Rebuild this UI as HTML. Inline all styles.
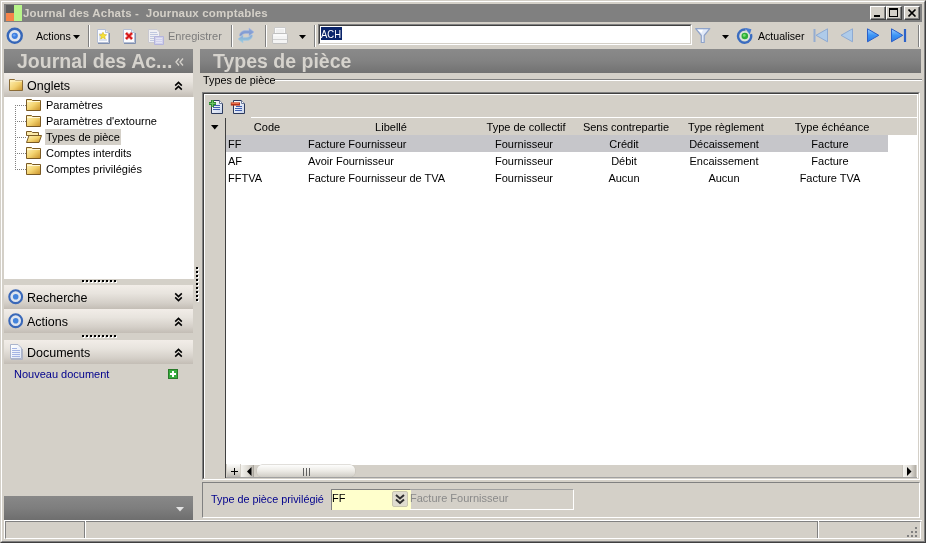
<!DOCTYPE html>
<html><head><meta charset="utf-8">
<style>
*{margin:0;padding:0;box-sizing:border-box}
html,body{width:926px;height:543px;overflow:hidden;background:#d4d0c8}
body{position:relative;will-change:transform;font-family:"Liberation Sans",sans-serif;font-size:11px;color:#000}
.a{position:absolute}
.t{position:absolute;white-space:nowrap;line-height:1}
.tc{position:absolute;white-space:nowrap;line-height:1;text-align:center}
.sepv{position:absolute;top:25px;width:2px;height:22px;border-left:1px solid #808080;border-right:1px solid #fff}
.secth{position:absolute;left:4px;width:189px;height:24px;background:linear-gradient(#f2ede8,#e8e4de 35%,#d4cfc8 75%,#c3bdb5)}
.hdr{position:absolute;top:49px;height:24px;background:linear-gradient(#8a8a8a,#828282 50%,#727272)}
.hdrt{position:absolute;white-space:nowrap;line-height:1;font-weight:bold;font-size:19.5px;color:#d6d3cd}
.sunk{position:absolute;border-top:1px solid #808080;border-left:1px solid #808080;border-bottom:1px solid #fff;border-right:1px solid #fff}
.tb{position:absolute;top:6px;width:16px;height:14px;background:#d4d0c8;border-top:1px solid #fff;border-left:1px solid #fff;border-right:1px solid #404040;border-bottom:1px solid #404040;box-shadow:inset -1px -1px 0 #808080}
.dotv{position:absolute;width:2px;background:repeating-linear-gradient(#000 0 1px,#000 1px 2px,transparent 2px 4px)}
.doth{position:absolute;height:2px;background:repeating-linear-gradient(90deg,#000 0 2px,transparent 2px 4px)}
.lt{font-size:11px}
</style></head><body>
<!-- window frame -->
<div class="a" style="left:0;top:0;width:926px;height:543px;border-top:1px solid #d4d0c8;border-left:1px solid #d4d0c8;border-right:1px solid #404040;border-bottom:1px solid #404040"></div>
<div class="a" style="left:1px;top:1px;width:924px;height:541px;border-top:1px solid #fff;border-left:1px solid #fff;border-right:1px solid #808080;border-bottom:1px solid #808080"></div>

<!-- title bar -->
<div class="a" style="left:4px;top:4px;width:918px;height:18px;background:#808080"></div>
<div class="a" style="left:6px;top:5px;width:8px;height:8px;background:#5c5c5c"></div>
<div class="a" style="left:6px;top:13px;width:8px;height:8px;background:#f5844a"></div>
<div class="a" style="left:14px;top:5px;width:8px;height:16px;background:#b8f58a"></div>
<div class="t" style="left:23px;top:8px;font-weight:bold;font-size:11.5px;letter-spacing:0.17px;color:#d4d0c8">Journal des Achats -&nbsp; Journaux comptables</div>
<div class="tb" style="left:870px"><div class="a" style="left:3px;top:8px;width:6px;height:2px;background:#000"></div></div>
<div class="tb" style="left:886px"><div class="a" style="left:2px;top:1px;width:9px;height:9px;border:1px solid #000;border-top-width:2px"></div></div>
<div class="tb" style="left:904px"><svg class="a" style="left:3px;top:2px" width="9" height="8" viewBox="0 0 9 8"><path d="M0.5 0.5L7.5 7.5M7.5 0.5L0.5 7.5" stroke="#000" stroke-width="1.6" fill="none"/></svg></div>
<!-- toolbar -->
<svg class="a" style="left:5px;top:27px" width="19" height="19" viewBox="0 0 19 19">
<circle cx="9.75" cy="8.8" r="7" fill="#dfe5ee" stroke="#3566b8" stroke-width="2.4"/>
<circle cx="9.75" cy="8.8" r="3.1" fill="#3d7ee0"/>
<circle cx="9.2" cy="8.2" r="1.3" fill="#6ea6f2"/>
</svg>
<div class="t" style="left:36px;top:31px;font-size:10.6px">Actions</div>
<svg class="a" style="left:73px;top:35px" width="7" height="4" viewBox="0 0 7 4"><path d="M0 0H7L3.5 4Z" fill="#000"/></svg>
<div class="sepv" style="left:88px"></div>
<!-- new doc -->
<svg class="a" style="left:96px;top:29px" width="14" height="15" viewBox="0 0 14 15">
<path d="M1.5 0.5H9.5L12.5 3.5V13.5H1.5Z" fill="#fbfcff" stroke="#b4bed4"/>
<path d="M9.5 0.5V3.5H12.5" fill="#e8ecf4" stroke="#b4bed4"/>
<path d="M2 14.5H13.5V4" fill="none" stroke="#8090b0" stroke-width="1"/>
<path d="M3 5H6M3 7H5M3 9H5M3 11H11" stroke="#b8c6e0"/>
<path d="M7 3.2L8.1 5.6L10.6 5.8L8.7 7.5L9.3 10L7 8.7L4.7 10L5.3 7.5L3.4 5.8L5.9 5.6Z" fill="#f4e23a" stroke="#d8b818" stroke-width="0.6"/>
</svg>
<!-- delete doc -->
<svg class="a" style="left:122px;top:29px" width="14" height="15" viewBox="0 0 14 15">
<path d="M1.5 0.5H9.5L12.5 3.5V13.5H1.5Z" fill="#fbfcff" stroke="#b4bed4"/>
<path d="M9.5 0.5V3.5H12.5" fill="#e8ecf4" stroke="#b4bed4"/>
<path d="M2 14.5H13.5V4" fill="none" stroke="#8090b0" stroke-width="1"/>
<path d="M4 4L10 10M10 4L4 10" stroke="#f06060" stroke-width="3"/>
<path d="M4 4L10 10M10 4L4 10" stroke="#d01010" stroke-width="1.4"/>
</svg>
<!-- save disabled -->
<svg class="a" style="left:148px;top:29px" width="17" height="16" viewBox="0 0 17 16">
<path d="M0.5 0.5H9L11.5 3V13.5H0.5Z" fill="#f0f0f4" stroke="#c8c8d0"/>
<path d="M2 3.5H9M2 5.5H10M2 7.5H10M2 9.5H10M2 11.5H10" stroke="#c0c8e0"/>
<path d="M6.5 7.5H15.5V15.5H6.5Z" fill="#d0d0ec" stroke="#b4b4dc"/>
<path d="M8 9.5H14M8 11.5H14M8 13.5H14" stroke="#e4e4f4"/>
</svg>
<div class="t" style="left:168px;top:31px;font-size:11px;color:#7c7c7c">Enregistrer</div>
<div class="sepv" style="left:231px"></div>
<!-- refresh faded -->
<svg class="a" style="left:237px;top:27px" width="18" height="17" viewBox="0 0 18 17">
<defs><linearGradient id="rf1" x1="0" y1="0" x2="0" y2="1"><stop offset="0" stop-color="#8aa8dc"/><stop offset="1" stop-color="#7f96cc"/></linearGradient>
<linearGradient id="rf2" x1="0" y1="0" x2="0" y2="1"><stop offset="0" stop-color="#86a6d8"/><stop offset="1" stop-color="#98d0dc"/></linearGradient></defs>
<path d="M2.5 9C2.5 5.5 5 3.5 9 3.5H12V1L17 5L12 9V6.5H9C6.5 6.5 5 7.5 4.5 9Z" fill="url(#rf1)" stroke="#a8b8e0" stroke-width="0.6"/>
<path d="M15.5 8C15.5 11.5 13 13.5 9 13.5H6V16L1 12L6 8V10.5H9C11.5 10.5 13 9.5 13.5 8Z" fill="url(#rf2)" stroke="#a8c8e0" stroke-width="0.6"/>
</svg>
<div class="sepv" style="left:265px"></div>
<!-- printer -->
<svg class="a" style="left:271px;top:27px" width="18" height="18" viewBox="0 0 18 18">
<path d="M3.5 0.5H14.5V8H3.5Z" fill="#fafafa" stroke="#cacaca"/>
<path d="M5 3H13M5 5H13" stroke="#e4e4e4"/>
<path d="M1.5 7.5Q1.5 6.5 3 6.5H15Q16.5 6.5 16.5 7.5V15.5Q16.5 16.5 15 16.5H3Q1.5 16.5 1.5 15.5Z" fill="#f4f4f4" stroke="#c0c0c0"/>
<path d="M2 12.5H16" stroke="#d0d0d0"/>
<path d="M2.5 8H15.5" stroke="#fff"/>
</svg>
<svg class="a" style="left:299px;top:35px" width="7" height="4" viewBox="0 0 7 4"><path d="M0 0H7L3.5 4Z" fill="#000"/></svg>
<div class="sepv" style="left:314px"></div>
<!-- input -->
<div class="a" style="left:318px;top:24px;width:374px;height:21px;background:#fff;border-top:1px solid #808080;border-left:1px solid #808080;border-right:1px solid #fff;border-bottom:1px solid #fff"></div>
<div class="a" style="left:319px;top:25px;width:372px;height:19px;border-top:1px solid #404040;border-left:1px solid #404040;border-right:1px solid #d4d0c8;border-bottom:1px solid #d4d0c8"></div>
<div class="a" style="left:321px;top:27px;width:21px;height:13px;background:#0a246a"></div>
<div class="t" style="left:321px;top:29px;font-size:11px;color:#fff;transform:scaleX(0.86);transform-origin:0 0">ACH</div>
<!-- filter -->
<svg class="a" style="left:695px;top:28px" width="16" height="16" viewBox="0 0 16 16">
<path d="M0.7 0.7H14.8L9.2 7.5V14.5H6.3V7.5Z" fill="#e2eaf9" stroke="#8fa3c9" stroke-width="1.2" stroke-linejoin="round"/>
<path d="M2.5 1.8H8L6.5 5Z" fill="#fff"/>
</svg>
<svg class="a" style="left:722px;top:35px" width="7" height="4" viewBox="0 0 7 4"><path d="M0 0H7L3.5 4Z" fill="#000"/></svg>
<!-- refresh circle -->
<svg class="a" style="left:735px;top:28px" width="18" height="17" viewBox="0 0 18 17">
<circle cx="9.8" cy="8.2" r="5" fill="#d8e4dc"/>
<path d="M15.9 6.2A6.6 6.6 0 1 1 10.6 1.6" fill="none" stroke="#3a6cc0" stroke-width="2.4"/>
<path d="M9.6 -0.4L16.4 1.2L14.8 6.6Z" fill="#4a7cd0"/>
<circle cx="9.8" cy="8" r="3.3" fill="#2eae38"/>
<circle cx="9.3" cy="7.4" r="1.4" fill="#78de70"/>
</svg>
<div class="t" style="left:758px;top:31px;font-size:10.6px">Actualiser</div>
<!-- nav -->
<svg class="a" style="left:813px;top:28px" width="16" height="15" viewBox="0 0 16 15">
<path d="M1.5 1V14" stroke="#94acd0" stroke-width="2"/>
<path d="M14.5 0.8V13.8L3 7.3Z" fill="#aecbea" stroke="#8eaad2" stroke-width="1"/>
</svg>
<svg class="a" style="left:840px;top:28px" width="14" height="15" viewBox="0 0 14 15">
<path d="M12.5 0.8V13.8L1 7.3Z" fill="#aecbea" stroke="#8eaad2" stroke-width="1"/>
</svg>
<svg class="a" style="left:866px;top:28px" width="14" height="15" viewBox="0 0 14 15">
<defs><linearGradient id="gb" x1="0" y1="0" x2="0" y2="1"><stop offset="0" stop-color="#9ccdff"/><stop offset="0.5" stop-color="#3d95f5"/><stop offset="1" stop-color="#2a7ae6"/></linearGradient></defs>
<path d="M1.5 0.8V13.8L12.8 7.3Z" fill="url(#gb)" stroke="#2b5fc8" stroke-width="1"/>
</svg>
<svg class="a" style="left:890px;top:28px" width="17" height="15" viewBox="0 0 17 15">
<path d="M1.5 0.8V13.8L12.8 7.3Z" fill="url(#gb)" stroke="#2b5fc8" stroke-width="1"/>
<path d="M15 1V14" stroke="#2d62c8" stroke-width="2.2"/>
</svg>
<div class="sepv" style="left:918px"></div>
<!-- left panel -->
<div class="hdr" style="left:4px;width:189px"></div>
<div class="hdrt" style="left:17px;top:52.4px">Journal des Ac...</div>
<svg class="a" style="left:175px;top:58px" width="9" height="8" viewBox="0 0 9 8"><path d="M4 0.5L1 4L4 7.5M8 0.5L5 4L8 7.5" fill="none" stroke="#d6d3cd" stroke-width="1.3"/></svg>

<div class="secth" style="top:73px"></div>
<svg class="a" style="left:9px;top:78px" width="15" height="14" viewBox="0 0 15 14">
<defs><linearGradient id="fy" x1="0" y1="0" x2="1" y2="1"><stop offset="0" stop-color="#fff2b8"/><stop offset="0.55" stop-color="#f2d070"/><stop offset="1" stop-color="#c8922c"/></linearGradient></defs>
<path d="M0.5 1.5H5.5L6.5 2.5H13.5V12.5H0.5Z" fill="url(#fy)" stroke="#8a6a34"/>
<path d="M1 3H13" stroke="#fff6d0"/>
</svg>
<div class="t" style="left:27px;top:80px;font-size:12.5px">Onglets</div>
<svg class="a" style="left:174px;top:81px" width="9" height="10" viewBox="0 0 9 10"><path d="M1.2 4.6L4.5 1.4L7.8 4.6M1.2 8.6L4.5 5.4L7.8 8.6" fill="none" stroke="#000" stroke-width="1.55"/></svg>

<!-- tree -->
<div class="a" style="left:4px;top:97px;width:190px;height:182px;background:#fff"></div>
<div class="a" style="left:15px;top:105px;width:1px;height:65px;background:repeating-linear-gradient(#808080 0 1px,transparent 1px 2px)"></div>
<div class="a" style="left:15px;top:105px;width:11px;height:1px;background:repeating-linear-gradient(90deg,#808080 0 1px,transparent 1px 2px)"></div>
<div class="a" style="left:15px;top:121px;width:11px;height:1px;background:repeating-linear-gradient(90deg,#808080 0 1px,transparent 1px 2px)"></div>
<div class="a" style="left:15px;top:137px;width:11px;height:1px;background:repeating-linear-gradient(90deg,#808080 0 1px,transparent 1px 2px)"></div>
<div class="a" style="left:15px;top:153px;width:11px;height:1px;background:repeating-linear-gradient(90deg,#808080 0 1px,transparent 1px 2px)"></div>
<div class="a" style="left:15px;top:169px;width:11px;height:1px;background:repeating-linear-gradient(90deg,#808080 0 1px,transparent 1px 2px)"></div>
<div class="a" style="left:45px;top:129px;width:76px;height:16px;background:#d4d0c8"></div>
<svg class="a" style="left:26px;top:99px" width="16" height="78" viewBox="0 0 16 78">
<defs><linearGradient id="fy2" x1="0" y1="0" x2="1" y2="1"><stop offset="0" stop-color="#fff4c0"/><stop offset="0.5" stop-color="#f4d470"/><stop offset="1" stop-color="#c89028"/></linearGradient></defs>
<g id="fold"><path d="M0.5 0.5H5.5L6.5 1.5H14.5V11.5H0.5Z" fill="url(#fy2)" stroke="#7a5a24"/><path d="M1 2.5H14" stroke="#fff8d8"/></g>
<use href="#fold" y="16"/>
<g transform="translate(0,32)"><path d="M0.5 0.5H5.5L6.5 1.5H12.5V4.5H0.5Z" fill="#fbe9a8" stroke="#7a5a24"/><path d="M0.5 11.5L3 4.5H15.5L13 11.5Z" fill="url(#fy2)" stroke="#7a5a24"/></g>
<use href="#fold" y="48"/>
<use href="#fold" y="64"/>
</svg>
<div class="t lt" style="left:46px;top:100px">Paramètres</div>
<div class="t lt" style="left:46px;top:116px">Paramètres d'extourne</div>
<div class="t lt" style="left:46px;top:132px">Types de pièce</div>
<div class="t lt" style="left:46px;top:148px">Comptes interdits</div>
<div class="t lt" style="left:46px;top:164px">Comptes privilégiés</div>

<!-- splitter dots -->
<div class="a" style="left:83px;top:281px;width:35px;height:2px;background:repeating-linear-gradient(90deg,#fff 0 2px,transparent 2px 4px)"></div>
<div class="a" style="left:82px;top:280px;width:35px;height:2px;background:repeating-linear-gradient(90deg,#000 0 2px,transparent 2px 4px)"></div>

<div class="secth" style="top:285px"></div>
<svg class="a" style="left:7px;top:288px" width="17" height="17" viewBox="0 0 17 17">
<circle cx="8.7" cy="8.7" r="6.4" fill="#dfe5ee" stroke="#3a68b8" stroke-width="2.1"/>
<circle cx="8.7" cy="8.7" r="2.8" fill="#4484dc"/>
</svg>
<div class="t" style="left:27px;top:292px;font-size:12.5px">Recherche</div>
<svg class="a" style="left:174px;top:292px" width="9" height="10" viewBox="0 0 9 10"><path d="M1.2 1.4L4.5 4.6L7.8 1.4M1.2 5.4L4.5 8.6L7.8 5.4" fill="none" stroke="#000" stroke-width="1.55"/></svg>

<div class="secth" style="top:309px"></div>
<svg class="a" style="left:7px;top:312px" width="17" height="17" viewBox="0 0 17 17">
<circle cx="8.7" cy="8.7" r="6.4" fill="#dfe5ee" stroke="#3a68b8" stroke-width="2.1"/>
<circle cx="8.7" cy="8.7" r="2.8" fill="#4484dc"/>
</svg>
<div class="t" style="left:27px;top:316px;font-size:12.5px">Actions</div>
<svg class="a" style="left:174px;top:317px" width="9" height="10" viewBox="0 0 9 10"><path d="M1.2 4.6L4.5 1.4L7.8 4.6M1.2 8.6L4.5 5.4L7.8 8.6" fill="none" stroke="#000" stroke-width="1.55"/></svg>

<div class="a" style="left:83px;top:336px;width:35px;height:2px;background:repeating-linear-gradient(90deg,#fff 0 2px,transparent 2px 4px)"></div>
<div class="a" style="left:82px;top:335px;width:35px;height:2px;background:repeating-linear-gradient(90deg,#000 0 2px,transparent 2px 4px)"></div>

<div class="secth" style="top:340px"></div>
<svg class="a" style="left:9px;top:344px" width="14" height="16" viewBox="0 0 14 16">
<defs><linearGradient id="dd" x1="0" y1="0" x2="1" y2="1"><stop offset="0" stop-color="#ffffff"/><stop offset="1" stop-color="#dfe6f6"/></linearGradient></defs>
<path d="M1.5 0.5H9L12.5 4V14.5H1.5Z" fill="url(#dd)" stroke="#aab4cc"/>
<path d="M3 4.5H8M3 6.5H11M3 8.5H11M3 10.5H11M3 12.5H11" stroke="#a4b4e4"/>
<path d="M2 15.5H13.5V5" fill="none" stroke="#b0b4c4"/>
</svg>
<div class="t" style="left:27px;top:347px;font-size:12.5px">Documents</div>
<svg class="a" style="left:174px;top:348px" width="9" height="10" viewBox="0 0 9 10"><path d="M1.2 4.6L4.5 1.4L7.8 4.6M1.2 8.6L4.5 5.4L7.8 8.6" fill="none" stroke="#000" stroke-width="1.55"/></svg>
<div class="t lt" style="left:14px;top:369px;color:#00008c">Nouveau document</div>
<svg class="a" style="left:168px;top:369px" width="10" height="10" viewBox="0 0 10 10">
<rect x="0.5" y="0.5" width="9" height="9" fill="#34ac3c" stroke="#2a7a2a"/>
<path d="M5 2V8M2 5H8" stroke="#fff" stroke-width="2"/>
</svg>

<!-- left bottom bar -->
<div class="a" style="left:4px;top:496px;width:189px;height:24px;background:linear-gradient(#888888,#7e7e7e 50%,#6e6e6e)"></div>
<svg class="a" style="left:176px;top:507px" width="8" height="5" viewBox="0 0 8 5"><path d="M0 0H8L4 4.5Z" fill="#e4e4e4"/></svg>

<!-- vertical splitter dots -->
<div class="a" style="left:197px;top:268px;width:2px;height:35px;background:repeating-linear-gradient(#fff 0 2px,transparent 2px 4px)"></div>
<div class="a" style="left:196px;top:267px;width:2px;height:35px;background:repeating-linear-gradient(#000 0 2px,transparent 2px 4px)"></div>
<!-- main panel -->
<div class="hdr" style="left:200px;width:721px"></div>
<div class="hdrt" style="left:213px;top:52.4px">Types de pièce</div>
<div class="t lt" style="left:203px;top:75px;font-size:10.8px">Types de pièce</div>
<div class="a" style="left:275px;top:79px;width:647px;height:1px;background:#808080"></div>
<div class="a" style="left:275px;top:80px;width:647px;height:1px;background:#fff"></div>

<!-- grid box -->
<div class="a" style="left:202px;top:92px;width:718px;height:388px;border-top:1px solid #808080;border-left:1px solid #808080;border-right:1px solid #fff;border-bottom:1px solid #fff"></div>
<div class="a" style="left:203px;top:93px;width:716px;height:386px;border-top:1px solid #404040;border-left:1px solid #404040;border-right:1px solid #d4d0c8;border-bottom:1px solid #d4d0c8"></div>
<div class="a" style="left:204px;top:94px;width:714px;height:384px;border-top:1px solid #fff;border-left:1px solid #fff"></div>
<div class="a" style="left:917px;top:95px;width:1px;height:383px;background:#fff"></div>
<!-- grid toolbar icons -->
<svg class="a" style="left:208px;top:99px" width="17" height="16" viewBox="0 0 17 16">
<defs><linearGradient id="dg" x1="0" y1="0" x2="1" y2="1"><stop offset="0" stop-color="#ffffff"/><stop offset="1" stop-color="#c8d4ec"/></linearGradient></defs>
<path d="M3.5 1.5H11.5L14.5 4.5V14.5H3.5Z" fill="url(#dg)" stroke="#2c3a5c"/>
<path d="M11.5 1.5V4.5H14.5" fill="#fff" stroke="#6a7898"/>
<path d="M6 6.5H12M5 8.5H12M5 10.5H12" stroke="#4060b0"/>
<path d="M4.5 1V8M1 4.5H8" stroke="#2e8a34" stroke-width="3"/>
<path d="M4.5 1.5V7.5M1.5 4.5H7.5" stroke="#6cc468" stroke-width="1"/>
</svg>
<svg class="a" style="left:230px;top:99px" width="17" height="16" viewBox="0 0 17 16">
<path d="M3.5 1.5H11.5L14.5 4.5V14.5H3.5Z" fill="url(#dg)" stroke="#2c3a5c"/>
<path d="M11.5 1.5V4.5H14.5" fill="#fff" stroke="#6a7898"/>
<path d="M6 7.5H12M5 9.5H12M5 11.5H12" stroke="#4060b0"/>
<path d="M0.8 5H10" stroke="#b83418" stroke-width="3.2"/>
<path d="M1.5 4.2H9" stroke="#f4805c" stroke-width="1.2"/>
</svg>
<!-- header row -->
<div class="a" style="left:251px;top:117px;width:666px;height:1px;background:#fff"></div>
<div class="a" style="left:225px;top:118px;width:1px;height:360px;background:#404040"></div>
<svg class="a" style="left:211px;top:125px" width="8" height="5" viewBox="0 0 8 5"><path d="M0 0H7.5L3.75 4.5Z" fill="#000"/></svg>
<div class="tc lt" style="left:226px;top:122px;width:80px;padding-left:2px">Code</div>
<div class="tc lt" style="left:341px;top:122px;width:100px">Libellé</div>
<div class="tc lt" style="left:476px;top:122px;width:100px">Type de collectif</div>
<div class="tc lt" style="left:576px;top:122px;width:100px">Sens contrepartie</div>
<div class="tc lt" style="left:676px;top:122px;width:100px">Type règlement</div>
<div class="tc lt" style="left:782px;top:122px;width:100px">Type échéance</div>
<!-- data -->
<div class="a" style="left:226px;top:135px;width:691px;height:329px;background:#fff"></div>
<div class="a" style="left:226px;top:135px;width:662px;height:17px;background:#c6c6ca"></div>
<div class="t lt" style="left:228px;top:139px">FF</div>
<div class="t lt" style="left:308px;top:139px">Facture Fournisseur</div>
<div class="tc lt" style="left:474px;top:139px;width:100px">Fournisseur</div>
<div class="tc lt" style="left:574px;top:139px;width:100px">Crédit</div>
<div class="tc lt" style="left:674px;top:139px;width:100px">Décaissement</div>
<div class="tc lt" style="left:780px;top:139px;width:100px">Facture</div>
<div class="t lt" style="left:228px;top:156px">AF</div>
<div class="t lt" style="left:308px;top:156px">Avoir Fournisseur</div>
<div class="tc lt" style="left:474px;top:156px;width:100px">Fournisseur</div>
<div class="tc lt" style="left:574px;top:156px;width:100px">Débit</div>
<div class="tc lt" style="left:674px;top:156px;width:100px">Encaissement</div>
<div class="tc lt" style="left:780px;top:156px;width:100px">Facture</div>
<div class="t lt" style="left:228px;top:173px">FFTVA</div>
<div class="t lt" style="left:308px;top:173px">Facture Fournisseur de TVA</div>
<div class="tc lt" style="left:474px;top:173px;width:100px">Fournisseur</div>
<div class="tc lt" style="left:574px;top:173px;width:100px">Aucun</div>
<div class="tc lt" style="left:674px;top:173px;width:100px">Aucun</div>
<div class="tc lt" style="left:780px;top:173px;width:100px">Facture TVA</div>
<!-- scrollbar -->
<div class="a" style="left:226px;top:464px;width:691px;height:14px;background:#d4d0c8"></div>
<div class="a" style="left:241px;top:464px;width:676px;height:1px;background:#fff"></div>
<div class="a" style="left:227px;top:464px;width:13px;height:14px;background:linear-gradient(#fbfbfa,#e4e2dc 45%,#b4b0aa)"></div>
<svg class="a" style="left:230px;top:467px" width="9" height="9" viewBox="0 0 9 9"><path d="M4.5 1V8M1 4.5H8" stroke="#000" stroke-width="1"/></svg>
<div class="a" style="left:241px;top:465px;width:13px;height:13px;background:linear-gradient(90deg,#f4f3ef,#dcd9d2 60%,#bcb8b0);border-right:1px solid #a8a49c"></div>
<svg class="a" style="left:247px;top:467px" width="5" height="9" viewBox="0 0 5 9"><path d="M4.5 0V9L0 4.5Z" fill="#000"/></svg>
<div class="a" style="left:257px;top:465px;width:98px;height:12px;border-radius:5px;background:linear-gradient(#fdfdfc,#eceae5 50%,#cfccc5);box-shadow:0 0 0 0.5px #c4c0b8"></div>
<div class="a" style="left:303px;top:468px;width:8px;height:8px;background:repeating-linear-gradient(90deg,#606060 0 1px,transparent 1px 3px)"></div>
<div class="a" style="left:902px;top:465px;width:14px;height:13px;background:linear-gradient(90deg,#f4f3ef,#dcd9d2 60%,#b0aca4);border-left:1px solid #c8c4bc"></div>
<svg class="a" style="left:907px;top:467px" width="5" height="9" viewBox="0 0 5 9"><path d="M0 0V9L4.5 4.5Z" fill="#000"/></svg>
<div class="a" style="left:226px;top:477px;width:691px;height:1px;background:#a0a0a0"></div>

<!-- bottom panel -->
<div class="a" style="left:202px;top:482px;width:718px;height:36px;border-top:1px solid #808080;border-left:1px solid #808080;border-right:1px solid #fff;border-bottom:1px solid #fff"></div>
<div class="t lt" style="left:211px;top:494px;font-size:10.8px;color:#00008c">Type de pièce privilégié</div>
<div class="a" style="left:331px;top:489px;width:80px;height:21px;background:#ffffcc;border-top:1px solid #808080;border-left:1px solid #808080"></div>
<div class="t lt" style="left:332px;top:493px">FF</div>
<div class="a" style="left:392px;top:491px;width:16px;height:16px;background:#e0ddd0;border:1px solid #cac7b0;border-radius:2px"></div>
<svg class="a" style="left:395px;top:494px" width="10" height="11" viewBox="0 0 10 11"><path d="M1 1L5 4.5L9 1M1 5.5L5 9L9 5.5" fill="none" stroke="#303030" stroke-width="2"/></svg>
<div class="a" style="left:410px;top:489px;width:164px;height:21px;border-top:1px solid #a0a0a0;border-right:1px solid #fff;border-bottom:1px solid #fff"></div>
<div class="t lt" style="left:410px;top:493px;color:#8a8a8a">Facture Fournisseur</div>

<!-- status bar -->
<div class="a" style="left:4px;top:520px;width:918px;height:1px;background:#fff"></div>
<div class="a" style="left:4px;top:520px;width:1px;height:19px;background:#fff"></div>
<div class="sunk" style="left:5px;top:521px;width:916px;height:18px"></div>
<div class="a" style="left:84px;top:521px;width:1px;height:17px;background:#808080"></div>
<div class="a" style="left:85px;top:521px;width:1px;height:17px;background:#fff"></div>
<div class="a" style="left:817px;top:521px;width:1px;height:17px;background:#808080"></div>
<div class="a" style="left:818px;top:521px;width:1px;height:17px;background:#fff"></div>
<svg class="a" style="left:906px;top:526px" width="12" height="12" viewBox="0 0 12 12">
<g fill="#808080"><rect x="9" y="1" width="2" height="2"/><rect x="5" y="5" width="2" height="2"/><rect x="9" y="5" width="2" height="2"/><rect x="1" y="9" width="2" height="2"/><rect x="5" y="9" width="2" height="2"/><rect x="9" y="9" width="2" height="2"/></g>
</svg>
</body></html>
